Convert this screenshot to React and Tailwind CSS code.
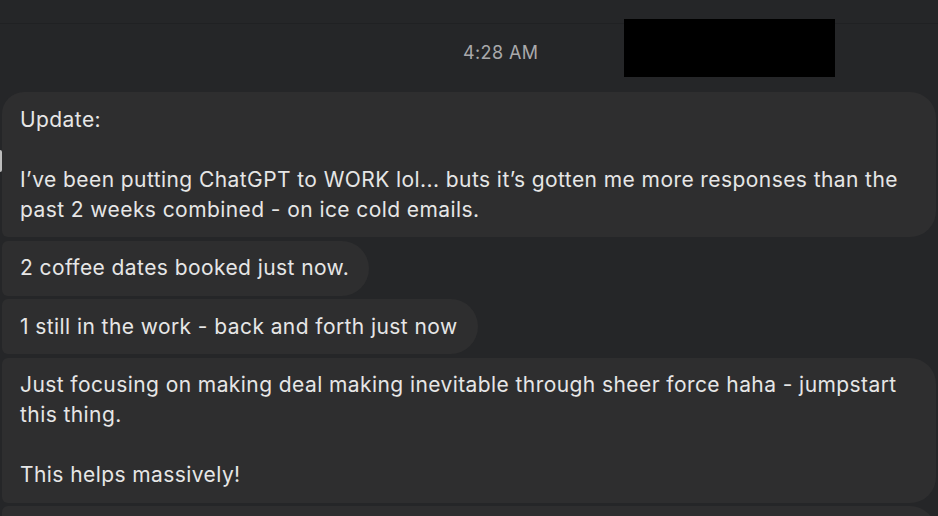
export default function App() {
  const font = { fontFamily: 'Inter, "Noto Sans", sans-serif' };
  return (
    <div className="w-[938px] h-[516px] overflow-hidden bg-[#252628] relative" style={font}>
      <div className="h-[24px] border-b border-[#202123]" />
      <div className="flex items-start -mt-[5px] h-[73px]">
        <div className="pl-[463px] pt-[23px] text-[18px] leading-[22px] text-[#a9a9ab] tracking-[0.4px]">4:28 AM</div>
        <div className="ml-[86px] w-[211px] h-[58px] bg-black" />
      </div>
      <div className="absolute left-0 top-[150px] w-[2px] h-[22px] rounded-r bg-[#bdbdbd]" />
      <div className="flex flex-col items-start gap-[3.5px] pl-[2px] pr-[2px] text-[21px] leading-[30px] text-[#e6e6e6] tracking-[0.42px]">
        <div className="bg-[#2e2e2f] rounded-tl-[22px] rounded-bl-[6px] rounded-r-[26px] pl-[18px] pr-5 py-[12.5px] w-full">
          <p>Update:</p>
          <p>&nbsp;</p>
          <p>I’ve been putting ChatGPT to WORK lol... buts it’s gotten me more responses than the past 2 weeks combined - on ice cold emails.</p>
        </div>
        <div className="bg-[#2e2e2f] rounded-l-[6px] rounded-r-[28px] pl-[18px] pr-5 py-[12.5px]">
          2 coffee dates booked just now.
        </div>
        <div className="bg-[#2e2e2f] rounded-l-[6px] rounded-r-[28px] pl-[18px] pr-5 py-[12.5px]">
          1 still in the work - back and forth just now
        </div>
        <div className="bg-[#2e2e2f] rounded-l-[6px] rounded-r-[26px] pl-[18px] pr-5 py-[12.5px] w-full">
          <p>Just focusing on making deal making inevitable through sheer force haha - jumpstart this thing.</p>
          <p>&nbsp;</p>
          <p>This helps massively!</p>
        </div>
        <div className="bg-[#2e2e2f] rounded-l-[6px] rounded-r-[26px] pl-[18px] pr-5 py-[12.5px] w-full h-[60px]" />
      </div>
    </div>
  );
}
